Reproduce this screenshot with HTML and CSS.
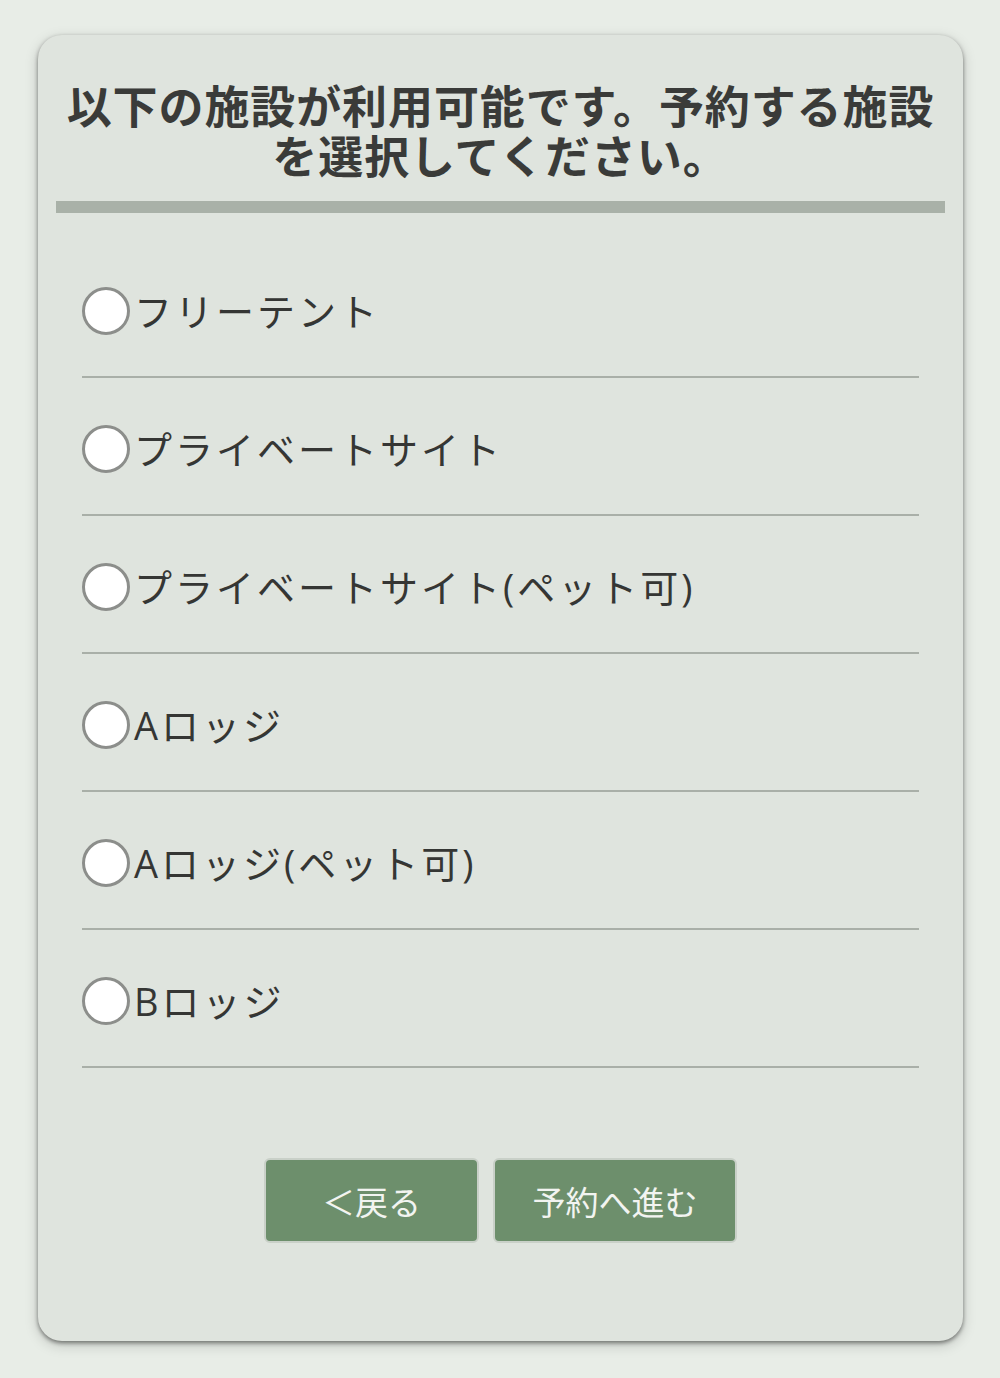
FILE: index.html
```html
<!DOCTYPE html>
<html lang="ja">
<head>
<meta charset="utf-8">
<link rel="stylesheet" href="styles.css">
</head>
<body>
<div class="card">
  <h1 class="title">以下の施設が利用可能です。予約する施設を選択してください。</h1>
  <div class="bar"></div>
  <ul class="list">
    <li class="row"><span class="radio"></span><span class="label">フリーテント</span></li>
    <li class="row"><span class="radio"></span><span class="label">プライベートサイト</span></li>
    <li class="row"><span class="radio"></span><span class="label">プライベートサイト(ペット可)</span></li>
    <li class="row"><span class="radio"></span><span class="label">Aロッジ</span></li>
    <li class="row"><span class="radio"></span><span class="label">Aロッジ(ペット可)</span></li>
    <li class="row"><span class="radio"></span><span class="label">Bロッジ</span></li>
  </ul>
  <div class="actions">
    <button class="btn btn-back">＜戻る</button>
    <button class="btn btn-next">予約へ進む</button>
  </div>
</div>
</body>
</html>
```

FILE: styles.css
```css
html, body {
  margin: 0;
  padding: 0;
  background: #e8ede7;
  font-family: "Noto Sans CJK JP", "Noto Sans", sans-serif;
}
body {
  padding: 35px 37px 37px 38px;
}
.card {
  width: 925px;
  height: 1306px;
  box-sizing: border-box;
  background: #dfe4de;
  border-radius: 24px;
  box-shadow: 0 2px 4px rgba(0,0,0,0.45), 0 4px 14px rgba(0,0,0,0.18);
  padding: 45px 18px 0 18px;
  display: flex;
  flex-direction: column;
}
.title {
  margin: 0;
  padding: 0;
  font-size: 45px;
  line-height: 50px;
  font-weight: 700;
  color: #3a3b39;
  text-align: center;
  letter-spacing: 0.9px;
}
.bar {
  height: 12px;
  background: #a9b1a8;
  margin-top: 21px;
}
.list {
  list-style: none;
  margin: 27px 26px 0 26px;
  padding: 0;
}
.row {
  display: flex;
  align-items: center;
  gap: 4px;
  padding: 47px 0 41px 0;
  border-bottom: 2px solid #a9afa8;
}
.radio {
  width: 48px;
  height: 48px;
  box-sizing: border-box;
  border: 3px solid #8c8e8b;
  border-radius: 50%;
  background: #ffffff;
  flex: none;
}
.label {
  font-family: "Open Sans", "Noto Sans CJK JP", sans-serif;
  font-size: 38px;
  line-height: 48px;
  color: #353634;
  letter-spacing: 3px;
}
.actions {
  display: flex;
  justify-content: center;
  gap: 14px;
  margin-top: 90px;
}
.btn {
  height: 85px;
  border: 2px solid #c9d0c8;
  border-radius: 6px;
  background: #6d8f6c;
  color: #f2f4f1;
  font-family: "Noto Sans CJK JP", "Noto Sans", sans-serif;
  font-size: 33px;
  padding: 0;
}
.btn-back { width: 215px; }
.btn-next { width: 244px; }
```
